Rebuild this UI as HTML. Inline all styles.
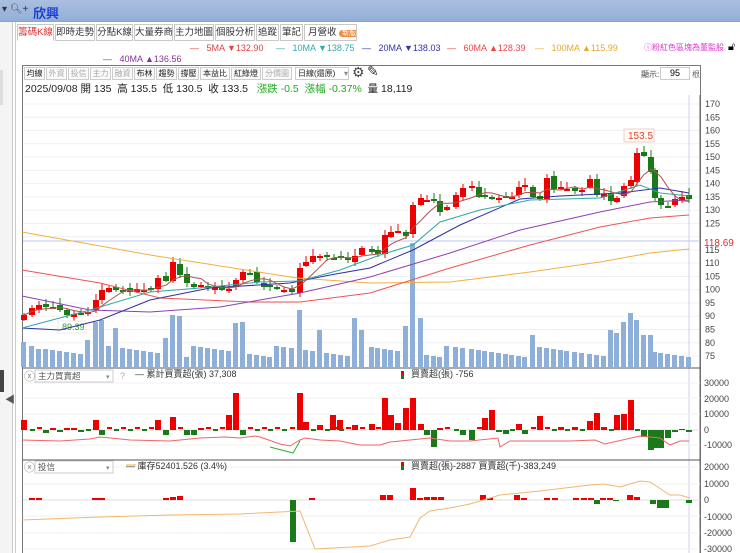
<!DOCTYPE html><html><head><meta charset="utf-8"><style>
*{margin:0;padding:0;box-sizing:border-box}
body{width:740px;height:553px;overflow:hidden;background:#fff;font-family:"Liberation Sans","Noto Sans CJK TC",sans-serif;position:relative;font-size:11px}
.abs{position:absolute;white-space:nowrap}
.top{left:0;top:0;width:740px;height:22px;background:linear-gradient(#a9bfdf,#93afd8);border-bottom:1px solid #8aa3c8}
.tab{position:absolute;top:24px;height:17px;border:1px solid #c8c8c8;background:#fff;font-size:9.5px;line-height:15px;text-align:center;color:#333;overflow:hidden;white-space:nowrap}
.tb{position:absolute;top:67px;height:13px;border:1px solid #ccc;font-size:8px;line-height:11px;text-align:center;color:#222;background:#fafafa;overflow:hidden;white-space:nowrap}
.tb.g{color:#aaa}
</style></head><body>
<div class="abs top"></div>
<div class="abs" style="left:2px;top:4px;font-size:10px;color:#333">▾ <span style="color:#555">&#x1F50D;&#xFE0E;</span>+</div>
<div class="abs" style="left:33px;top:3px;font-size:13px;font-weight:bold;color:#1a3fd0">欣興</div>
<div class="abs" style="left:0;top:22px;width:13px;height:531px;background:#f4f4f4;border-right:1px solid #ccc"></div>
<div class="abs" style="left:0;top:70px;width:3px;height:35px;background:#ddd"></div>
<div class="abs" style="left:0;top:370px;width:4px;height:22px;background:#444"></div>
<div class="abs" style="left:5px;top:391px;font-size:10px;color:#555">◀</div>
<div class="abs" style="left:15px;top:22px;width:1px;height:531px;background:#ccc"></div>

<div class="tab" style="left:17px;width:37px;color:#d33;border-bottom-color:#fff">籌碼K線</div>
<div class="tab" style="left:55px;width:40px">即時走勢</div>
<div class="tab" style="left:96px;width:37px">分點K線</div>
<div class="tab" style="left:134px;width:39px">大量券商</div>
<div class="tab" style="left:174px;width:40px">主力地圖</div>
<div class="tab" style="left:215px;width:40px">個股分析</div>
<div class="tab" style="left:256px;width:23px">追蹤</div>
<div class="tab" style="left:280px;width:23px">筆記</div>
<div class="tab" style="left:304px;width:53px;text-align:left;padding-left:3px">月營收 <span style="background:#f08a3a;color:#fff;border-radius:6px;font-size:7px;padding:0 3px">新版</span></div>

<div class="abs" style="left:190px;top:43px;font-size:9px;color:#d44">—&nbsp;&nbsp; 5MA ▼132.90</div>
<div class="abs" style="left:276px;top:43px;font-size:9px;color:#3aa">—&nbsp;&nbsp; 10MA ▼138.75</div>
<div class="abs" style="left:362px;top:43px;font-size:9px;color:#33a">—&nbsp;&nbsp; 20MA ▼138.03</div>
<div class="abs" style="left:447px;top:43px;font-size:9px;color:#e44">—&nbsp;&nbsp; 60MA ▲128.39</div>
<div class="abs" style="left:535px;top:43px;font-size:9px;color:#e9a830">—&nbsp;&nbsp; 100MA ▲115.99</div>
<div class="abs" style="left:644px;top:42px;font-size:8px;color:#d3c">ⓘ粉紅色區塊為董監股</div>
<div class="abs" style="left:728px;top:41px;font-size:11px">🔓&#xFE0E;</div>
<div class="abs" style="left:103px;top:54px;font-size:9px;color:#839">—&nbsp;&nbsp; 40MA ▲136.56</div>

<div class="abs" style="left:22px;top:65px;width:679px;height:488px;border:1px solid #777;border-bottom:none"></div>
<div class="tb" style="left:24px;width:21px">均線</div><div class="tb g" style="left:46px;width:21px">外資</div><div class="tb g" style="left:68px;width:21px">投信</div><div class="tb g" style="left:90px;width:21px">主力</div><div class="tb g" style="left:112px;width:21px">融資</div><div class="tb" style="left:134px;width:21px">布林</div><div class="tb" style="left:156px;width:21px">趨勢</div><div class="tb" style="left:178px;width:21px">撐壓</div><div class="tb" style="left:200px;width:30px">本益比</div><div class="tb" style="left:231px;width:30px">紅綠燈</div><div class="tb g" style="left:262px;width:30px">分價圖</div>
<div class="tb" style="left:295px;width:54px;background:#fff;text-align:left;padding-left:2px">日線(還原) <span style="float:right;color:#888">▾</span></div>
<div class="abs" style="left:352px;top:64px;font-size:14px;color:#444">⚙</div>
<div class="abs" style="left:367px;top:63px;font-size:14px;color:#333">✎</div>
<div class="abs" style="left:641px;top:69px;font-size:8px;color:#444">顯示: </div>
<div class="abs" style="left:660px;top:67px;width:30px;height:13px;border:1px solid #ccc;font-size:9px;text-align:center;line-height:11px">95</div>
<div class="abs" style="left:692px;top:69px;font-size:8px;color:#666">根</div>
<div class="abs" style="left:25px;top:81px;font-size:10.5px;color:#222">2025/09/08 開 135&nbsp; 高 135.5&nbsp; 低 130.5&nbsp; 收 133.5&nbsp;&nbsp; <span style="color:#2a2">漲跌 -0.5&nbsp; 漲幅 -0.37%</span>&nbsp; 量 18,119</div>

<svg id="s" class="abs" style="left:0;top:0" width="740" height="553" xmlns="http://www.w3.org/2000/svg"></svg>
<script>
var s=document.getElementById('s'),h='';
function L(x1,y1,x2,y2,c,w){h+='<line x1="'+x1+'" y1="'+y1+'" x2="'+x2+'" y2="'+y2+'" stroke="'+c+'" stroke-width="'+(w||1)+'"/>';}
function R(x,y,w,hh,c){if(hh<0){y+=hh;hh=-hh}h+='<rect x="'+x+'" y="'+y+'" width="'+w+'" height="'+Math.max(hh,1)+'" fill="'+c+'"/>';}
function T(x,y,t,c,sz){h+='<text x="'+x+'" y="'+y+'" fill="'+(c||'#333')+'" font-size="'+(sz||9)+'" font-family="Liberation Sans,Noto Sans CJK TC,sans-serif">'+t+'</text>';}
function P(pts,c,w){var d='M'+pts.map(function(p){return p[0]+','+p[1]}).join('L');h+='<path d="'+d+'" fill="none" stroke="'+c+'" stroke-width="'+(w||1)+'"/>';}
function yp(p){return 104+(170-p)*2.653}
for(var p=75;p<=170;p+=5){var y=yp(p);L(23,y,700,y,'#f0f0f0');if(p!=120)T(705,y+3,p,'#444',9);}
L(700,95,700,553,'#666');
L(23,241,700,241,'#b8c4f0');L(689,95,689,553,'#c8d0f4');
T(704,246,'118.69','#c33',10);
var K=[[24,315],[32,308],[39,305],[46,307],[53,307],[60,310],[67,315],[74,314],[81,313],[88,312],[96,300],[102,290],[109,288],[116,290],[123,290],[130,292],[137,289],[144,290],[151,288],[158,278],[166,281],[173,262],[180,275],[187,283],[194,287],[201,286],[208,288],[215,287],[222,290],[229,289],[236,280],[243,272],[250,273],[257,282],[264,287],[270,287],[277,289],[284,290],[292,292],[300,268],[306,262],[313,256],[320,256],[327,257],[334,258],[341,258],[348,260],[355,256],[362,248],[372,252],[378,254],[385,235],[391,232],[398,231],[406,236],[413,205],[421,198],[427,200],[434,200],[440,212],[447,207],[456,195],[463,188],[472,186],[479,197],[485,197],[492,197],[499,198],[506,196],[512,197],[519,187],[525,185],[533,197],[540,199],[547,178],[554,189],[561,187],[567,189],[575,191],[582,190],[590,179],[597,195],[604,194],[611,201],[617,198],[624,186],[631,180],[637,153],[644,156],[651,172],[655,198],[661,205],[668,206],[675,199],[682,197],[689,199]];
var op=[320];for(var i=1;i<K.length;i++)op.push(K[i-1][1]+((i*37)%5-2));
var cl=[];
for(var i=0;i<K.length;i++){var x=K[i][0],c=K[i][1],o=op[i];cl.push(c);var up=c<o;var col=up?'#e00':'#1a7a1a';if(Math.abs(c-o)<1.5)col=(i%2)?'#e00':'#1a7a1a';
var hi=Math.min(c,o)-2-(i*7)%6,lo=Math.max(c,o)+1+(i*5)%4;L(x,hi,x,lo,col);R(x-3,Math.min(c,o),6,Math.max(Math.abs(c-o),2),col);}
var V={173:315,180:316,300:310,413:243,421:318,483:289,624:322,631:313,637:320,96:322,102:320,116:328,236:323,243:322,88:340,166:338,320:330,406:326,362:330,355:318,170:322,611:330,617:333,644:335,651:335,24:342,32:346,39:349,533:335};
for(var i=0;i<K.length;i++){var x=K[i][0];var t=V[x]||(346+(i*13)%12);R(x-3,t,5,367-t,'#8eb0d8');}
T(62,330,'89.39','#393',9);h+='<rect x="58" y="321" width="28" height="12" fill="none" stroke="#eed"/>';
h+='<rect x="624" y="129" width="30" height="13" fill="#fffbe8" stroke="#ecd"/>';T(628,139,'153.5','#d44',10);
P([[22,232],[150,255],[297,278],[370,283],[450,282],[530,272],[600,262],[650,253],[689,249]],'#f0b040');
P([[22,270],[100,283],[160,298],[250,302],[300,302],[370,293],[450,268],[530,245],[600,227],[650,218],[689,215]],'#e55');
P([[22,296],[90,310],[150,312],[220,307],[300,293],[370,277],[450,253],[520,230],[600,212],[650,202],[689,200]],'#9040b0');
P([[22,328],[60,330],[100,320],[150,300],[210,288],[290,283],[330,275],[370,268],[413,250],[460,225],[520,199],[560,196],[620,193],[660,188],[689,193]],'#3030a0');
P([[22,328],[90,310],[150,292],[200,288],[260,282],[300,281],[340,270],[380,255],[413,245],[440,222],[480,210],[530,200],[600,198],[640,185],[660,193],[689,196]],'#30a8a0');
var m5=[];for(var i=0;i<K.length;i++){var a=0,n=0;for(var j=Math.max(0,i-4);j<=i;j++){a+=cl[j];n++}m5.push([K[i][0],a/n]);}P(m5,'#b05050');
L(23,368,700,368,'#555');L(23,460,700,460,'#555');
[383,398,414,430,445].forEach(function(y){L(23,y,700,y,'#f0f0f0')});L(23,430,700,430,'#ddd');
[['30000',386],['20000',402],['10000',417],['0',433],['-10000',448]].forEach(function(a){T(704,a[1],a[0],'#444',9)});
var B2={24:-10,46:3,53:-2,60:2,67:-2,74:-2,81:2,96:-10,102:5,158:-10,166:5,173:-13,187:5,194:5,201:-2,229:-15,236:-37,243:5,300:-37,306:-8,320:-5,333:-15,340:-10,355:-5,372:-6,385:-32,391:-15,398:-7,406:-22,413:-32,421:-6,427:5,434:17,440:-2,463:5,472:10,485:-12,499:2,506:4,519:-6,525:4,540:-14,561:-3,575:-3,590:-9,597:-17,604:-3,617:-15,631:-30,624:-16,644:7,651:20,655:18,661:18,668:8,675:2,682:-1,689:2,492:-20};
for(var k in B2){var v=B2[k],x=+k;R(x-3,430,6,v,v<0?'#e00':'#1a7a1a');}
for(var i=0;i<K.length;i++){var x=K[i][0];if(B2[x]===undefined)R(x-2,429,5,i%2?2:-2,i%2?'#1a7a1a':'#e00');}
P([[22,440],[60,441],[90,439],[100,437],[130,440],[170,441],[200,438],[225,437],[240,438],[255,436],[260,437],[280,444],[290,446],[300,440],[305,438],[320,440],[340,441],[360,445],[380,445],[390,442],[410,440],[430,438],[450,441],[470,441],[498,438],[500,447],[510,441],[540,441],[570,441],[595,440],[605,444],[640,436],[660,438],[670,445],[680,441],[689,441]],'#e66');
P([[270,447],[293,453],[300,441]],'#3a3');
T(24,380,'ⓧ','#888',11);h+='<rect x="35" y="370" width="78" height="12" fill="#fff" stroke="#ccc"/>';T(38,379,'主力買賣超','#555',8.5);T(106,379,'▾','#888',7);T(120,379,'?','#9ab',9);
T(135,377,'— 累計買賣超(張) 37,308','#333',9);R(401,371,3,4,'#e00');R(401,375,3,4,'#1a7a1a');T(411,377,'買賣超(張) -756','#333',9);
[467,484,500,516,533,549].forEach(function(y){L(23,y,700,y,'#f2f2f2')});L(23,500,700,500,'#ddd');
[['20000',470],['10000',487],['0',503],['-10000',520],['-20000',536],['-30000',552]].forEach(function(a){T(704,a[1],a[0],'#444',9)});
T(24,471,'ⓧ','#888',11);h+='<rect x="35" y="461" width="78" height="12" fill="#fff" stroke="#ccc"/>';T(38,470,'投信','#555',8.5);T(106,470,'▾','#888',7);
T(126,469,'— 庫存52401.526 (3.4%)','#333',9);L(126,465,136,465,'#f0b040');
R(401,462,3,4,'#e00');R(401,466,3,4,'#1a7a1a');T(411,469,'買賣超(張)-2887 買賣超(千)-383,249','#333',9);
var B3={32:-2,39:-2,95:-2,100:-2,102:-2,166:-2,173:-3,180:-4,293:42,312:-2,383:-5,390:-5,413:-12,420:-2,427:-3,434:-3,441:-3,483:-5,490:-2,517:-5,524:-2,630:-5,637:-3,653:4,660:8,666:8,689:3,597:4,616:1,547:-2,555:-2,576:-2,584:-2,591:-2,603:-2,610:-2};
for(var k in B3){var v=B3[k],x=+k;R(x-3,500,6,v,v<0?'#e00':'#1a7a1a');}
P([[22,520],[100,517],[170,515],[240,514],[300,511],[315,549],[370,546],[390,540],[410,537],[420,518],[430,511],[450,508],[470,504],[500,495],[540,491],[590,485],[604,484],[620,487],[640,481],[650,482],[670,495],[680,495],[690,498]],'#f0b870');
s.innerHTML=h;
</script>
</body></html>
